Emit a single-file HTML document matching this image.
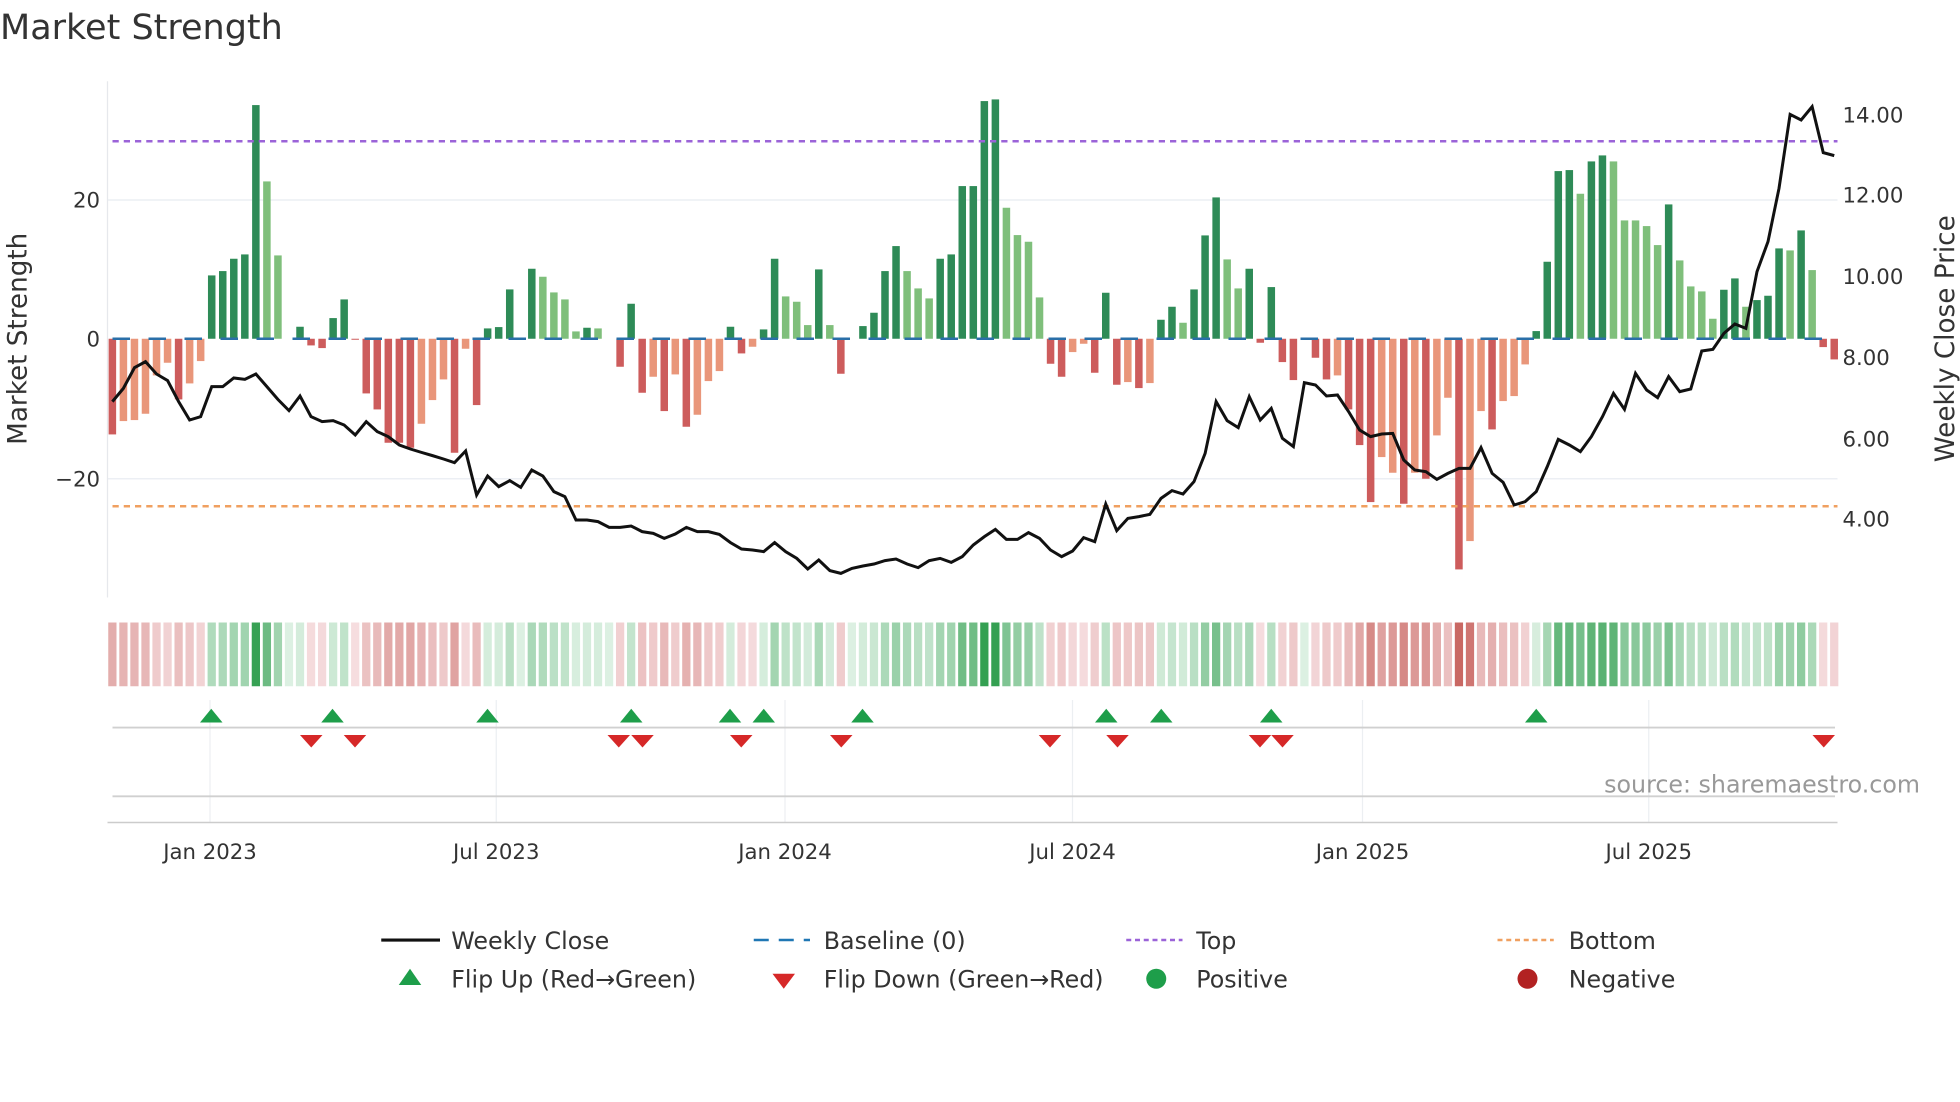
<!DOCTYPE html>
<html><head><meta charset="utf-8"><style>
html,body{margin:0;padding:0;background:#fff;}
svg{display:block;font-family:"DejaVu Sans","Liberation Sans",sans-serif;}
</style></head><body>
<svg id="c" width="1960" height="1102" viewBox="0 0 1568 881.6" xmlns="http://www.w3.org/2000/svg">
<rect width="1568" height="882" fill="#fff"/>
<text x="0" y="31" font-size="28" fill="#333">Market Strength</text>
<line x1="86" y1="160" x2="1470" y2="160" stroke="#eceff4" stroke-width="1.2"/>
<line x1="86" y1="383" x2="1470" y2="383" stroke="#eceff4" stroke-width="1.2"/>
<line x1="86" y1="65" x2="86" y2="478" stroke="#e6e8ec" stroke-width="1"/>
<g font-size="17" fill="#333" text-anchor="end">
<text x="80" y="166">20</text><text x="80" y="277">0</text><text x="80" y="389">−20</text>
</g>
<g font-size="17" fill="#333">
<text x="1474" y="98">14.00</text><text x="1474" y="162">12.00</text><text x="1474" y="227">10.00</text>
<text x="1474" y="292">8.00</text><text x="1474" y="357">6.00</text><text x="1474" y="421">4.00</text>
</g>
<text transform="translate(21,271) rotate(-90)" font-size="21" fill="#333" text-anchor="middle">Market Strength</text>
<text transform="translate(1563,271) rotate(-90)" font-size="21" fill="#333" text-anchor="middle">Weekly Close Price</text>
<g id="bars"></g>
<g id="base"></g>
<line x1="90" y1="113" x2="1470" y2="113" stroke="#9b63d8" stroke-width="2" stroke-dasharray="5,4"/>
<line x1="90" y1="405" x2="1470" y2="405" stroke="#f0a060" stroke-width="2" stroke-dasharray="5,4"/>
<polyline id="price" fill="none" stroke="#111" stroke-width="2.4" stroke-linejoin="miter"/>
<g id="heat"></g>
<g stroke="#eceff2" stroke-width="1">
<line x1="168" y1="560" x2="168" y2="658"/><line x1="397" y1="560" x2="397" y2="658"/>
<line x1="628" y1="560" x2="628" y2="658"/><line x1="858" y1="560" x2="858" y2="658"/>
<line x1="1090" y1="560" x2="1090" y2="658"/><line x1="1319" y1="560" x2="1319" y2="658"/>
</g>
<line x1="90" y1="582" x2="1468" y2="582" stroke="#d0d0d0" stroke-width="1.5"/>
<line x1="90" y1="637" x2="1468" y2="637" stroke="#d0d0d0" stroke-width="1.5"/>
<line x1="86" y1="658" x2="1470" y2="658" stroke="#ccc" stroke-width="1.2"/>
<g id="flips"></g>
<text x="1536" y="634" font-size="19" fill="#999" text-anchor="end">source: sharemaestro.com</text>
<g font-size="17" fill="#333" text-anchor="middle">
<text x="168" y="687">Jan 2023</text><text x="397" y="687">Jul 2023</text><text x="628" y="687">Jan 2024</text>
<text x="858" y="687">Jul 2024</text><text x="1090" y="687">Jan 2025</text><text x="1319" y="687">Jul 2025</text>
</g>
<g font-size="19" fill="#333">
<line x1="305" y1="752" x2="352" y2="752" stroke="#111" stroke-width="2.5"/>
<text x="361" y="759">Weekly Close</text>
<line x1="603" y1="752" x2="648" y2="752" stroke="#1f77b4" stroke-width="2" stroke-dasharray="12,8"/>
<text x="659" y="759">Baseline (0)</text>
<line x1="901" y1="752" x2="946" y2="752" stroke="#9b63d8" stroke-width="2" stroke-dasharray="4,3"/>
<text x="957" y="759">Top</text>
<line x1="1198" y1="752" x2="1243" y2="752" stroke="#f0a060" stroke-width="2" stroke-dasharray="4,3"/>
<text x="1255" y="759">Bottom</text>
<polygon points="319,788 337,788 328,775" fill="#1e9e4a"/>
<text x="361" y="790">Flip Up (Red→Green)</text>
<polygon points="618,779 636,779 627,791" fill="#d62828"/>
<text x="659" y="790">Flip Down (Green→Red)</text>
<circle cx="925" cy="783" r="8" fill="#1e9e4a"/>
<text x="957" y="790">Positive</text>
<circle cx="1222" cy="783" r="8" fill="#b22222"/>
<text x="1255" y="790">Negative</text>
</g>
</svg>
<script>
var B=[[1,'R',1095],[2,'O',1055],[3,'O',1052],[4,'O',1033],[5,'O',918],[6,'O',880],[7,'R',990],[8,'O',942],[9,'O',875],[10,'D',618],[11,'D',605],[12,'D',568],[13,'D',555],[14,'D',107],[15,'L',336],[16,'L',558],[17,'D',808],[18,'D',772],[19,'R',828],[20,'R',836],[21,'D',746],[22,'D',690],[23,'R',811],[24,'R',972],[25,'R',1020],[26,'R',1120],[27,'R',1120],[28,'R',1135],[29,'O',1063],[30,'O',992],[31,'O',930],[32,'R',1150],[33,'O',838],[34,'R',1007],[35,'D',777],[36,'D',773],[37,'D',660],[38,'D',808],[39,'D',598],[40,'L',622],
[41,'L',669],[42,'L',690],[43,'L',786],[44,'D',775],[45,'L',777],[46,'D',808],[47,'R',892],[48,'D',703],[49,'R',970],[50,'O',922],[51,'R',1025],[52,'O',915],[53,'R',1072],[54,'O',1036],[55,'O',935],[56,'O',905],[57,'D',772],[58,'R',852],[59,'O',832],[60,'D',780],[61,'D',568],[62,'L',681],[63,'L',697],[64,'L',767],[65,'D',600],[66,'L',767],[67,'R',913],[68,'D',808],[69,'D',770],[70,'D',730],[71,'D',605],[72,'D',530],[73,'L',605],[74,'L',657],[75,'L',687],[76,'D',568],[77,'D',555],[78,'D',350],[79,'D',350],[80,'D',95],
[81,'D',90],[82,'L',415],[83,'L',497],[84,'L',517],[85,'L',684],[86,'R',883],[87,'R',922],[88,'O',848],[89,'O',823],[90,'R',910],[91,'D',670],[92,'R',946],[93,'O',938],[94,'R',956],[95,'O',941],[96,'D',751],[97,'D',712],[98,'L',760],[99,'D',660],[100,'D',498],[101,'D',384],[102,'L',570],[103,'L',657],[104,'D',598],[105,'R',820],[106,'D',653],[107,'R',878],[108,'R',932],[109,'R',808],[110,'R',865],[111,'R',930],[112,'O',918],[113,'R',1020],[114,'R',1127],[115,'R',1298],[116,'O',1163],[117,'O',1210],[118,'R',1303],[119,'O',1210],[120,'R',1228],
[121,'O',1098],[122,'O',985],[123,'R',1500],[124,'O',1415],[125,'O',1025],[126,'R',1080],[127,'O',995],[128,'O',980],[129,'O',885],[130,'D',785],[131,'D',577],[132,'D',305],[133,'D',302],[134,'L',373],[135,'D',276],[136,'D',258],[137,'L',276],[138,'L',453],[139,'L',453],[140,'L',470],[141,'L',527],[142,'D',405],[143,'L',573],[144,'L',651],[145,'L',666],[146,'L',748],[147,'D',661],[148,'D',627],[149,'L',712],[150,'D',692],[151,'D',679],[152,'D',537],[153,'L',543],[154,'D',483],[155,'L',602],[156,'R',833],[157,'R',870]];
var P=[995,955,893,875,912,932,995,1050,1040,950,950,924,928,912,950,988,1022,978,1040,1055,1052,1065,1095,1055,1085,1100,1125,1137,1147,1157,1167,1178,1143,1275,1218,1250,1232,1252,1200,1218,
1265,1280,1350,1350,1355,1372,1372,1368,1385,1390,1405,1392,1372,1385,1385,1393,1418,1437,1440,1445,1418,1445,1465,1497,1470,1502,1510,1495,1488,1482,1472,1467,1482,1493,1472,1465,1477,1460,1425,1400,
1378,1408,1408,1388,1405,1440,1460,1443,1403,1415,1302,1382,1345,1340,1333,1285,1262,1272,1235,1150,995,1052,1073,980,1050,1015,1105,1130,938,945,978,975,1025,1080,1100,1092,1090,1170,1200,1205,
1228,1210,1195,1195,1133,1210,1237,1305,1295,1265,1190,1108,1125,1145,1100,1040,970,1018,910,960,983,920,965,957,843,838,790,762,775,605,515,355,133,150,110,248,257];
var C={D:'#2e8b57',L:'#7fbf7b',R:'#cd5c5c',O:'#e9967a'};
var ns='http://www.w3.org/2000/svg';
function el(t,a,p){var e=document.createElementNS(ns,t);for(var k in a)e.setAttribute(k,a[k]);document.getElementById(p).appendChild(e);return e;}
function X(i){return 89.9+(i-1)*8.83;}
var hs=[];
B.forEach(function(b){var h=(808-b[2])/3.75;hs.push(h);var x=X(b[0]);
 if(Math.abs(h)<0.4)return;
 if(h>0)el('rect',{x:x-3,y:271-h,width:6,height:h,fill:C[b[1]]},'bars');
 else el('rect',{x:x-3,y:271,width:6,height:-h,fill:C[b[1]]},'bars');});
for(var x=90;x<1468;x+=28.8){el('line',{x1:x,y1:271,x2:Math.min(x+14,1468),y2:271,stroke:'#2a6fa8','stroke-width':2},'base');}
var pts=P.map(function(y,i){return X(i+1).toFixed(1)+','+(56+y/3.75).toFixed(1);}).join(' ');
document.getElementById('price').setAttribute('points',pts);
function mix(a,b,t){return 'rgb('+a.map(function(v,i){return Math.round(v+(b[i]-v)*t);}).join(',')+')';}
hs.forEach(function(h,i){var x=X(i+1);var t=Math.min(1,Math.abs(h)/190);
 var c=h>=0?mix([220,240,226],[52,160,82],t):mix([246,222,224],[200,100,95],t);
 el('rect',{x:x-3.3,y:498,width:6.6,height:51,fill:c},'heat');});
[169,266,390,505,584,611,690,885,929,1017,1229].forEach(function(x){el('polygon',{points:(x-9)+',578 '+(x+9)+',578 '+x+',567',fill:'#1e9e4a'},'flips');});
[249,284,495,514,593,673,840,894,1008,1026,1459].forEach(function(x){el('polygon',{points:(x-9)+',588 '+(x+9)+',588 '+x+',598',fill:'#d62828'},'flips');});
</script>
</body></html>
